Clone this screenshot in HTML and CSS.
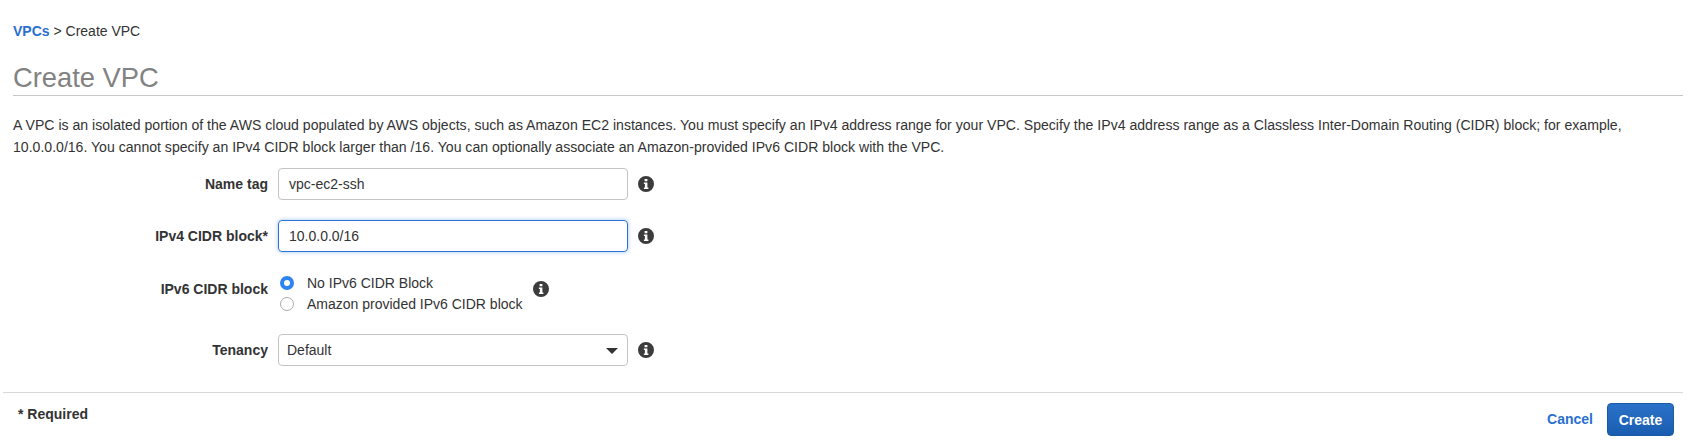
FILE: index.html
```html
<!DOCTYPE html>
<html lang="en">
<head>
    <meta charset="UTF-8">
    <title>Create VPC</title>
    <link rel="stylesheet" href="styles.css">
</head>
<body>

<svg class="icon-defs" width="0" height="0">
    <symbol id="info-icon" viewBox="0 0 16 16">
        <path fill-rule="evenodd" d="M8 0a8 8 0 1 0 0 16A8 8 0 0 0 8 0zM6.6 2.9h2.8v2.3H6.6zM5.9 6.4h3.5v5h1v1.7H5.9v-1.7h1v-3.3h-1z"/>
    </symbol>
</svg>

<div class="page">
    <div class="breadcrumb"><a class="crumb-link">VPCs</a> &gt; Create VPC</div>
    <h1 class="page-title">Create VPC</h1>
    <p class="intro">A VPC is an isolated portion of the AWS cloud populated by AWS objects, such as Amazon EC2 instances. You must specify an IPv4 address range for your VPC. Specify the IPv4 address range as a Classless Inter-Domain Routing (CIDR) block; for example, 10.0.0.0/16. You cannot specify an IPv4 CIDR block larger than /16. You can optionally associate an Amazon-provided IPv6 CIDR block with the VPC.</p>

    <div class="form">
        <div class="form-row">
            <label class="form-label">Name tag</label>
            <div class="field text-field">vpc-ec2-ssh</div>
            <svg class="info"><use href="#info-icon"/></svg>
        </div>
        <div class="form-row">
            <label class="form-label">IPv4 CIDR block*</label>
            <div class="field text-field focused">10.0.0.0/16</div>
            <svg class="info"><use href="#info-icon"/></svg>
        </div>
        <div class="form-row radio-row">
            <label class="form-label">IPv6 CIDR block</label>
            <div class="radio-group">
                <div class="radio-option"><span class="radio checked"></span>No IPv6 CIDR Block</div>
                <div class="radio-option"><span class="radio"></span>Amazon provided IPv6 CIDR block</div>
            </div>
            <svg class="info"><use href="#info-icon"/></svg>
        </div>
        <div class="form-row">
            <label class="form-label">Tenancy</label>
            <div class="field select-field">Default<span class="caret"></span></div>
            <svg class="info"><use href="#info-icon"/></svg>
        </div>
    </div>
</div>

<div class="footer">
    <span class="required">* Required</span>
    <div class="actions">
        <a class="cancel">Cancel</a>
        <button class="btn-create">Create</button>
    </div>
</div>

</body>
</html>
```

FILE: styles.css
```css
:root {
    --text: #333;
    --link: #2a6fd0;
    --border: #c4c4c4;
}
body {
    margin: 0;
    background: #fff;
    color: var(--text);
    font-family: "Liberation Sans", Arial, sans-serif;
    font-size: 14px;
}
.icon-defs { position: absolute; }
.page { padding: 23px 23px 0 13px; }
.breadcrumb { line-height: 16px; }
.crumb-link { color: var(--link); font-weight: bold; }
.page-title {
    margin: 24px 0 0;
    padding-bottom: 2px;
    height: 30px;
    border-bottom: 1px solid #c8c8c8;
    color: #828282;
    font-size: 27.3px;
    font-weight: normal;
    line-height: 30px;
}
.intro { margin: 18px 0 0; font-size: 14.08px; line-height: 22px; }
.form { margin: 10px 0 26px; }
.form-row {
    display: flex;
    align-items: center;
    height: 32px;
    margin-bottom: 20px;
}
.form-row:last-child { margin-bottom: 0; }
.radio-row { height: 42px; }
.radio-row .form-label,
.radio-row .info { margin-bottom: 9px; }
.form-label {
    width: 255px;
    margin-right: 10px;
    text-align: right;
    font-weight: bold;
}
.field {
    box-sizing: border-box;
    width: 350px;
    height: 32px;
    border: 1px solid var(--border);
    border-radius: 4px;
    line-height: 30px;
}
.text-field { padding-left: 10px; }
.focused {
    border-color: #2a74d4;
    box-shadow: 0 0 4px rgba(42, 116, 212, 0.45);
}
.select-field { position: relative; padding-left: 8px; }
.caret {
    position: absolute;
    right: 9px;
    top: 13px;
    border-left: 6px solid transparent;
    border-right: 6px solid transparent;
    border-top: 6px solid #333;
}
.info { width: 16px; height: 16px; margin-left: 10px; fill: #3c3c3c; }
.radio-group { width: 245px; }
.radio-option { display: flex; align-items: center; height: 21px; }
.radio {
    box-sizing: border-box;
    width: 14px;
    height: 14px;
    margin: 0 13px 0 2px;
    border: 1px solid #aaa;
    border-radius: 50%;
    background: #fff;
}
.radio.checked { border: 4px solid #2d84f0; background: #fff; }
.footer {
    display: flex;
    justify-content: space-between;
    box-sizing: border-box;
    width: 1680px;
    height: 56px;
    margin-left: 3px;
    padding: 10px 9px 0 15px;
    border-top: 1px solid #d8d8d8;
}
.required { font-weight: bold; line-height: 22px; }
.actions { display: flex; align-items: flex-start; }
.cancel { margin-right: 14px; color: var(--link); font-weight: bold; line-height: 33px; }
.btn-create {
    box-sizing: border-box;
    width: 67px;
    height: 33px;
    border: 1px solid #1b5aa5;
    border-radius: 4px;
    background: linear-gradient(#2a72c8, #1a5db0);
    color: #fff;
    font: bold 14px "Liberation Sans", Arial, sans-serif;
}
```
